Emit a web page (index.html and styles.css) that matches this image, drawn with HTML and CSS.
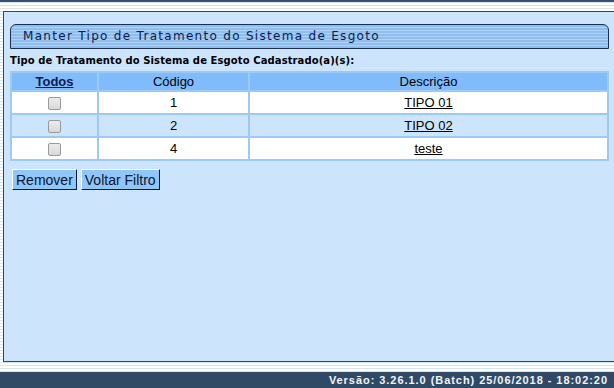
FILE: index.html
```html
<!DOCTYPE html>
<html lang="pt">
<head>
  <meta charset="UTF-8" />
  <title>Manter Tipo de Tratamento do Sistema de Esgoto</title>
  <link rel="stylesheet" href="styles.css">
</head>
<body>
  <div class="page">
    <div class="top-line"></div>
    <div class="main">
      <div class="tab-title">Manter Tipo de Tratamento do Sistema de Esgoto</div>
      <div class="subtitle">Tipo de Tratamento do Sistema de Esgoto Cadastrado(a)(s):</div>
      <table class="grid">
        <thead>
          <tr>
            <th class="col-check"><a href="javascript:;">Todos</a></th>
            <th class="col-code">Código</th>
            <th>Descrição</th>
          </tr>
        </thead>
        <tbody>
          <tr class="odd">
            <td><input type="checkbox" /></td>
            <td>1</td>
            <td><a href="javascript:;">TIPO 01</a></td>
          </tr>
          <tr class="even">
            <td><input type="checkbox" /></td>
            <td>2</td>
            <td><a href="javascript:;">TIPO 02</a></td>
          </tr>
          <tr class="odd">
            <td><input type="checkbox" /></td>
            <td>4</td>
            <td><a href="javascript:;">teste</a></td>
          </tr>
        </tbody>
      </table>
      <div class="actions">
        <button class="btn">Remover</button>
        <button class="btn">Voltar Filtro</button>
      </div>
    </div>
    <div class="footer">Versão: 3.26.1.0 (Batch) 25/06/2018 - 18:02:20</div>
  </div>
</body>
</html>
```

FILE: styles.css
```css
* {
  margin: 0;
  padding: 0;
  box-sizing: border-box;
}

body {
  background: repeating-linear-gradient(to bottom, #ffffff 0, #ffffff 2px, #d4e4f4 2px, #d4e4f4 3px);
  font-family: "Liberation Sans", Arial, sans-serif;
}

.page {
  height: 388px;
  display: flex;
  flex-direction: column;
}

.top-line {
  height: 2px;
  background: #34506e;
  margin-bottom: 9px;
}

.main {
  flex: 1;
  margin-left: 3px;
  background: #cce4fc;
  border-top: 1px solid #2f4a66;
  border-left: 1px solid #2f4a66;
  border-bottom: 1px solid #2f4a66;
  padding: 12px 5px 0 6px;
}

.tab-title {
  height: 25px;
  border: 1px solid #1c2f50;
  border-radius: 6px 6px 0 0;
  background: repeating-linear-gradient(to bottom, #8fbdee 0, #8fbdee 2px, #b0d2f6 2px, #b0d2f6 3px);
  font-family: "DejaVu Sans", Verdana, sans-serif;
  font-size: 12px;
  letter-spacing: 1.3px;
  color: #0b1a4e;
  line-height: 22px;
  padding-left: 12px;
}

.subtitle {
  font-family: "DejaVu Sans", Verdana, sans-serif;
  font-size: 10px;
  font-weight: bold;
  letter-spacing: 0.1px;
  color: #000;
  margin: 6px 0 5px;
}

.grid {
  width: 100%;
  border-collapse: collapse;
  border-top: 2px solid #000;
  font-size: 13px;
  color: #000;
}

.grid th,
.grid td {
  border: 2px solid #9ccaf4;
  text-align: center;
  font-weight: normal;
}

.grid th {
  background: #80bcfc;
  height: 19px;
  line-height: 15px;
}

.grid .col-check {
  width: 87px;
}

.grid .col-code {
  width: 151px;
}

.grid th a {
  font-weight: bold;
  color: #0b1a4e;
}

.grid td {
  height: 23px;
}

.grid tr.odd td {
  background: #ffffff;
}

.grid tr.even td {
  background: #cce4fc;
}

.grid td a {
  color: #000;
}

.grid input[type="checkbox"] {
  appearance: none;
  width: 13px;
  height: 13px;
  vertical-align: middle;
  border: 1px solid #9a9a9a;
  border-radius: 2px;
  background: linear-gradient(to bottom, #ececec, #d8d8d8);
}

.actions {
  margin-top: 8px;
  display: flex;
  gap: 4px;
  padding-left: 2px;
}

.btn {
  font-family: "Liberation Sans", Arial, sans-serif;
  font-size: 14px;
  color: #0a1630;
  background: #90c6f8;
  border: 1px solid;
  border-color: #ffffff #0a1a40 #0a1a40 #ffffff;
  height: 21px;
  padding: 0 3px;
}

.footer {
  margin-top: 10px;
  height: 16px;
  background: #304a65;
  color: #f2f4f8;
  font-size: 11px;
  font-weight: bold;
  letter-spacing: 0.95px;
  text-align: right;
  line-height: 16px;
  padding-right: 6px;
}
```
